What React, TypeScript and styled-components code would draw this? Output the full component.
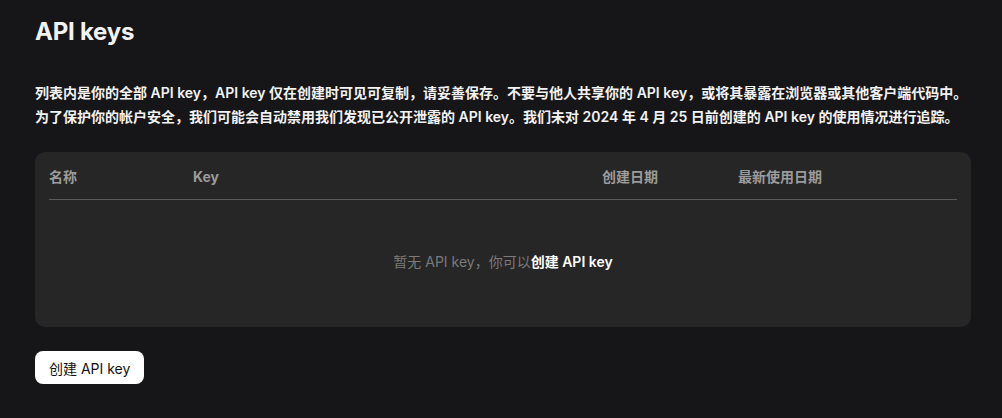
import styled, { createGlobalStyle } from "styled-components";

const GlobalStyle = createGlobalStyle`
  html, body {
    margin: 0;
    padding: 0;
    background: #161618;
  }
  body {
    font-family: Inter, "Noto Sans CJK SC", sans-serif;
    color: #f4f4f5;
  }
`;

const Page = styled.div`
  width: 1002px;
  height: 418px;
  box-sizing: border-box;
  padding: 17px 31px 0 35px;
  background: #161618;
`;

const Title = styled.h1`
  margin: 0;
  font-size: 24px;
  font-weight: 700;
  line-height: 30px;
  letter-spacing: -0.01em;
  color: #f2f2f2;
`;

const Desc = styled.p`
  margin: 34px 0 0;
  font-size: 14px;
  font-weight: 600;
  line-height: 24px;
  color: #f2f2f2;
`;

const Card = styled.div`
  margin-top: 23px;
  height: 175px;
  box-sizing: border-box;
  padding: 0 14px;
  background: #262626;
  border-radius: 10px;
  display: flex;
  flex-direction: column;
`;

const HeadRow = styled.div`
  display: grid;
  grid-template-columns: 144px 409px 136px 1fr;
  height: 47px;
  align-items: center;
  border-bottom: 1px solid #5a5a5a;
`;

const HeadCell = styled.div`
  font-size: 14px;
  font-weight: 700;
  line-height: 20px;
  height: 20px;
  color: #9b9b9b;
  padding-top: 2px;
`;

const Empty = styled.div`
  flex: 1;
  display: flex;
  align-items: center;
  justify-content: center;
  padding-bottom: 6px;
  font-size: 14px;
  color: #7a7a7a;
`;

const EmptyLink = styled.span`
  color: #ffffff;
  font-weight: 600;
  cursor: pointer;
`;

const CreateButton = styled.button`
  margin-top: 24px;
  height: 33px;
  padding: 0 14px;
  border: none;
  border-radius: 8px;
  background: #ffffff;
  color: #111111;
  font-family: Inter, "Noto Sans CJK SC", sans-serif;
  font-size: 14px;
  cursor: pointer;
`;

const columns = ["名称", "Key", "创建日期", "最新使用日期"];

export default function App() {
  return (
    <>
      <GlobalStyle />
      <Page>
        <Title>API keys</Title>
        <Desc>
          列表内是你的全部 API key，API key 仅在创建时可见可复制，请妥善保存。不要与他人共享你的 API key，或将其暴露在浏览器或其他客户端代码中。
          <br />
          为了保护你的帐户安全，我们可能会自动禁用我们发现已公开泄露的 API key。我们未对 2024 年 4 月 25 日前创建的 API key 的使用情况进行追踪。
        </Desc>
        <Card>
          <HeadRow>
            {columns.map((c) => (
              <HeadCell key={c}>{c}</HeadCell>
            ))}
          </HeadRow>
          <Empty>
            暂无 API key，你可以<EmptyLink>创建 API key</EmptyLink>
          </Empty>
        </Card>
        <CreateButton>创建 API key</CreateButton>
      </Page>
    </>
  );
}
